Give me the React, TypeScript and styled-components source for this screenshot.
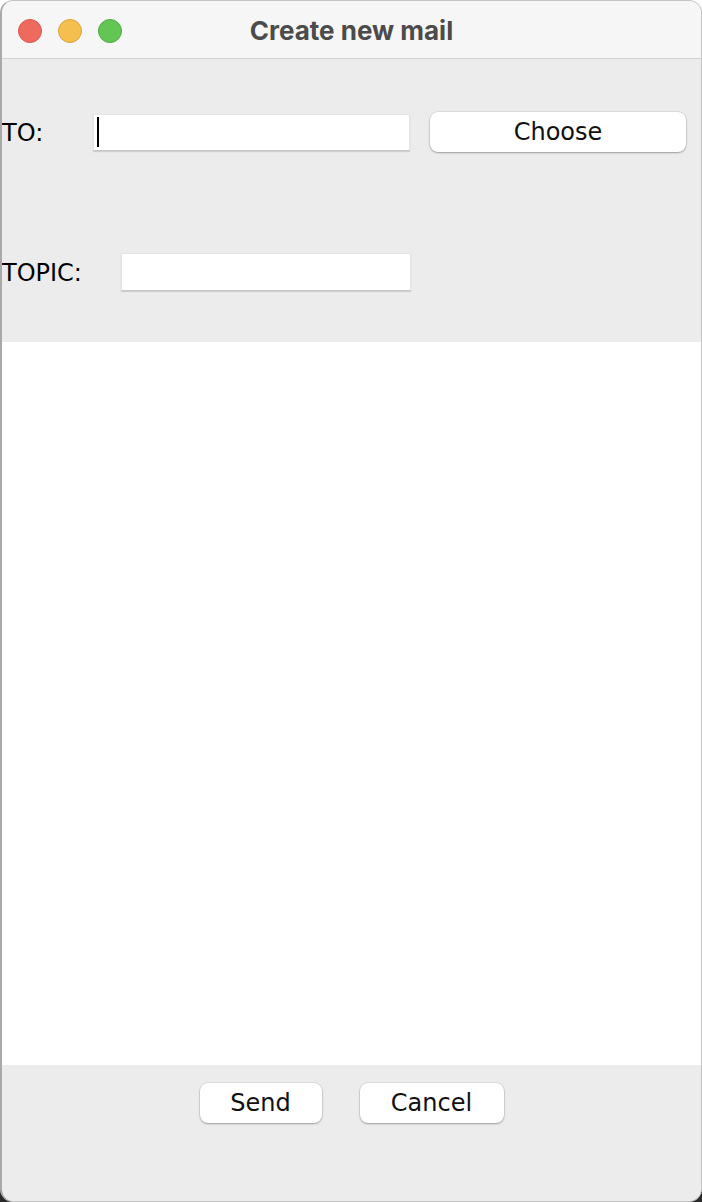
import styled, { createGlobalStyle } from "styled-components";

const GlobalStyle = createGlobalStyle`
  html, body {
    margin: 0;
    padding: 0;
    height: 1202px;
    background: linear-gradient(#ffffff 0 50%, #2a2a2a 50% 100%);
  }
  #root {
    height: 100%;
  }
`

const Window = styled.div`
  box-sizing: border-box;
  width: 702px;
  height: 1202px;
  display: flex;
  flex-direction: column;
  border-radius: 13px;
  overflow: hidden;
  border: 1px solid #c4c4c4;
  border-left: 2px solid #a9a9a9;
  background: #ececec;
  font-family: "DejaVu Sans", "Liberation Sans", sans-serif;
`

const TitleBar = styled.div`
  height: 57px;
  flex-shrink: 0;
  display: flex;
  align-items: center;
  position: relative;
  background: #f6f6f6;
  border-bottom: 1px solid #d2d2d2;
`

const Lights = styled.div`
  display: flex;
  gap: 16px;
  padding-left: 16px;
  padding-top: 2px;
`

const Light = styled.span<{ $fill: string; $edge: string }>`
  width: 24px;
  height: 24px;
  border-radius: 50%;
  box-sizing: border-box;
  background: ${(p) => p.$fill};
  border: 1px solid ${(p) => p.$edge};
`

const Title = styled.div`
  position: absolute;
  left: 0;
  right: 0;
  top: 0;
  bottom: 0;
  display: flex;
  justify-content: center;
  align-items: center;
  padding-top: 1px;
  font-family: Inter, "Liberation Sans", sans-serif;
  font-weight: 700;
  font-size: 26px;
  color: #4b4b4b;
  pointer-events: none;
`

const Form = styled.div`
  height: 283px;
  flex-shrink: 0;
  box-sizing: border-box;
  padding-top: 53px;
  display: flex;
  flex-direction: column;
  gap: 100px;
`

const Row = styled.div`
  height: 40px;
  display: flex;
  align-items: center;
`

const Label = styled.label<{ $w: number }>`
  width: ${(p) => p.$w}px;
  flex-shrink: 0;
  font-size: 24px;
  color: #000;
  padding-top: 1px;
`

const Field = styled.div<{ $w: number; $h: number }>`
  width: ${(p) => p.$w}px;
  height: ${(p) => p.$h}px;
  box-sizing: border-box;
  background: #fff;
  border: 1px solid #e4e4e4;
  border-bottom: 1px solid #c6c6c6;
  box-shadow: 0 1px 1px rgba(0, 0, 0, 0.12);
  display: flex;
  align-items: center;
  padding-left: 3px;
`

const Caret = styled.span`
  width: 2px;
  height: 30px;
  background: #000;
`

const Gap = styled.span`
  width: 20px;
  flex-shrink: 0;
`

const Button = styled.button<{ $w: number }>`
  width: ${(p) => p.$w}px;
  height: 40px;
  border: none;
  border-radius: 8px;
  background: #fff;
  box-shadow: 0 0 0 0.5px rgba(0, 0, 0, 0.12), 0 1px 2px rgba(0, 0, 0, 0.3);
  font-family: "DejaVu Sans", "Liberation Sans", sans-serif;
  font-size: 24px;
  color: #111;
  padding: 0 0 1px;
  cursor: default;
`

const Body = styled.div`
  flex: 1;
  background: #fff;
`

const Footer = styled.div`
  height: 136px;
  flex-shrink: 0;
  box-sizing: border-box;
  padding-top: 18px;
  display: flex;
  justify-content: center;
  gap: 38px;
`

export default function App() {
  return (
    <>
      <GlobalStyle />
      <Window>
        <TitleBar>
          <Lights>
            <Light $fill="#ee6a5f" $edge="#d55a50" />
            <Light $fill="#f5bf4f" $edge="#d8a43f" />
            <Light $fill="#62c554" $edge="#50a844" />
          </Lights>
          <Title>Create new mail</Title>
        </TitleBar>
        <Form>
          <Row>
            <Label $w={91}>TO:</Label>
            <Field $w={317} $h={37}>
              <Caret />
            </Field>
            <Gap />
            <Button $w={256}>Choose</Button>
          </Row>
          <Row>
            <Label $w={119}>TOPIC:</Label>
            <Field $w={290} $h={38} />
          </Row>
        </Form>
        <Body />
        <Footer>
          <Button $w={122}>Send</Button>
          <Button $w={144}>Cancel</Button>
        </Footer>
      </Window>
    </>
  );
}
